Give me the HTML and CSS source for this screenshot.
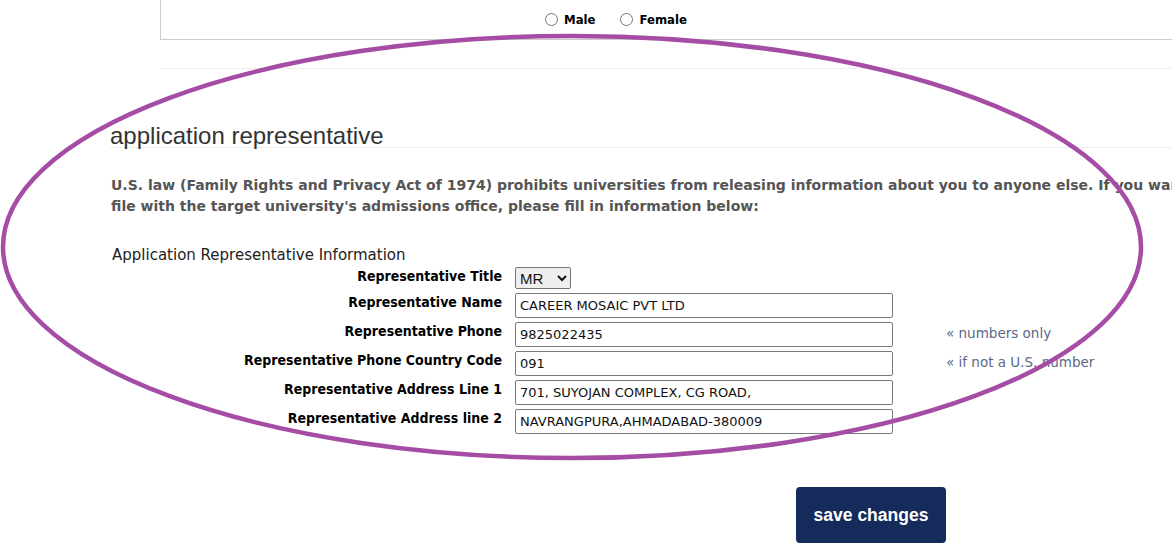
FILE: index.html
```html
<!DOCTYPE html>
<html lang="en">
<head>
  <meta charset="UTF-8" />
  <title>Application Representative</title>
  <link rel="stylesheet" href="styles.css">
</head>
<body>
  <div class="top-box">
    <div class="gender">
      <label><input type="radio" name="gender" /> Male</label>
      <label><input type="radio" name="gender" /> Female</label>
    </div>
  </div>
  <div class="divider"></div>

  <section class="rep">
    <h2>application representative</h2>
    <p class="notice">
      <span class="line">U.S. law (Family Rights and Privacy Act of 1974) prohibits universities from releasing information about you to anyone else. If you want a representative on</span>
      <span class="line">file with the target university's admissions office, please fill in information below:</span>
    </p>

    <div class="caption">Application Representative Information</div>
    <div class="rep-form">
      <label>Representative Title</label>
      <div><select class="title-select"><option>MR</option><option>MS</option><option>MRS</option></select></div>
      <span class="hint"></span>

      <label>Representative Name</label>
      <input type="text" value="CAREER MOSAIC PVT LTD" />
      <span class="hint"></span>

      <label>Representative Phone</label>
      <input type="text" value="9825022435" />
      <span class="hint">« numbers only</span>

      <label>Representative Phone Country Code</label>
      <input type="text" value="091" />
      <span class="hint">« if not a U.S. number</span>

      <label>Representative Address Line 1</label>
      <input type="text" value="701, SUYOJAN COMPLEX, CG ROAD," />
      <span class="hint"></span>

      <label>Representative Address line 2</label>
      <input type="text" value="NAVRANGPURA,AHMADABAD-380009" />
      <span class="hint"></span>
    </div>

    <div class="actions">
      <button class="save-btn">save changes</button>
    </div>
  </section>

  <!-- hand-drawn highlight -->
  <svg class="annotation" width="1172" height="554" viewBox="0 0 1172 554">
    <ellipse cx="572" cy="247" rx="569" ry="211" fill="none" stroke="#a54ca5" stroke-width="4.5" />
  </svg>
</body>
</html>
```

FILE: styles.css
```css
body {
  margin: 0;
  background: #fff;
  overflow: hidden;
  position: relative;
  height: 554px;
  font-family: "DejaVu Sans", Verdana, sans-serif;
}

.top-box {
  margin-left: 160px;
  height: 39px;
  border-left: 1px solid #ccc;
  border-bottom: 1px solid #ccc;
}

.gender {
  display: flex;
  gap: 20px;
  padding: 12px 0 0 379px;
  font-size: 13px;
  font-weight: bold;
  font-stretch: condensed;
}

.gender label {
  display: flex;
  align-items: center;
  gap: 3px;
}

.gender input {
  margin: 0 3px 0 5px;
  width: 13px;
  height: 13px;
}

.divider {
  margin: 28px 0 0 160px;
  border-top: 1px solid #eee;
}

.rep {
  padding-left: 110px;
}

h2 {
  margin: 56px 0 0;
  font-family: "Liberation Sans", Arial, sans-serif;
  font-size: 24px;
  font-weight: normal;
  line-height: 22px;
  color: #333;
  border-bottom: 1px solid #eee;
}

.notice {
  margin: 27px 0 0 1px;
  font-size: 14px;
  font-weight: bold;
  line-height: 21px;
  color: #555;
  white-space: nowrap;
}

.notice .line {
  display: block;
}

.caption {
  margin: 29px 0 0 2px;
  font-size: 15px;
  line-height: 18px;
  color: #222;
}

.rep-form {
  display: grid;
  grid-template-columns: 392px 378px auto;
  column-gap: 13px;
  row-gap: 4px;
  margin-top: 3px;
  align-items: start;
}

.rep-form label {
  text-align: right;
  font-size: 14px;
  font-weight: bold;
  font-stretch: condensed;
  line-height: 16px;
  color: #000;
  padding-top: 1px;
}

.rep-form input {
  box-sizing: border-box;
  height: 25px;
  width: 378px;
  margin: 0;
  padding: 0 4px;
  border: 1px solid #7a7a7a;
  border-radius: 2px;
  font-family: "DejaVu Sans", Verdana, sans-serif;
  font-size: 13px;
  color: #111;
}

.title-select {
  box-sizing: border-box;
  width: 56px;
  height: 22px;
  margin: 0;
  font-family: "Liberation Sans", Arial, sans-serif;
  font-size: 15px;
  border: 1px solid #767676;
  border-radius: 2px;
  color: #111;
}

.hint {
  padding: 3px 0 0 40px;
  font-size: 13.5px;
  color: #5a6888;
  white-space: nowrap;
}

.actions {
  margin: 53px 0 0 686px;
}

.save-btn {
  width: 150px;
  height: 56px;
  border: none;
  border-radius: 4px;
  background: #142b5c;
  color: #fff;
  font-family: "Liberation Sans", Arial, sans-serif;
  font-size: 17.5px;
  font-weight: bold;
  cursor: pointer;
}

.annotation {
  position: absolute;
  top: 0;
  left: 0;
  pointer-events: none;
}
```
